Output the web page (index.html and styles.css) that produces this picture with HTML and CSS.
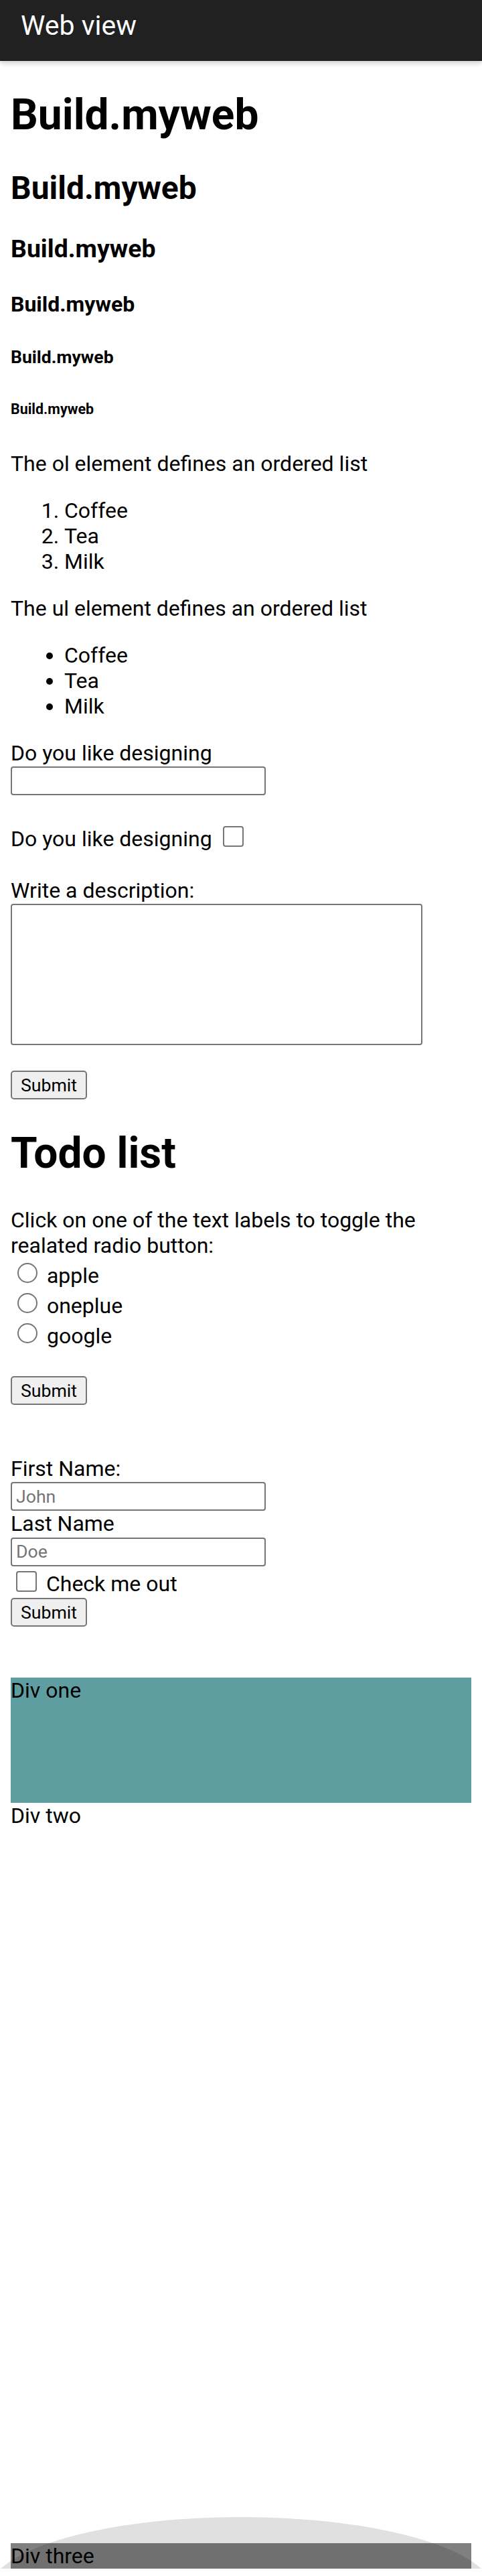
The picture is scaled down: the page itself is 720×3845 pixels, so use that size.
FILE: index.html
```html
<!DOCTYPE html>
<html lang="en">
<head>
<meta charset="utf-8">
<title>Web view</title>
<link rel="stylesheet" href="styles.css">
</head>
<body>
<header class="appbar"><span class="appbar-title">Web view</span></header>
<main class="page">
  <h1>Build.myweb</h1>
  <h2>Build.myweb</h2>
  <h3>Build.myweb</h3>
  <h4>Build.myweb</h4>
  <h5>Build.myweb</h5>
  <h6>Build.myweb</h6>
  <p>The ol element defines an ordered list</p>
  <ol class="list">
    <li>Coffee</li>
    <li>Tea</li>
    <li>Milk</li>
  </ol>
  <p>The ul element defines an ordered list</p>
  <ul class="list">
    <li>Coffee</li>
    <li>Tea</li>
    <li>Milk</li>
  </ul>
  <form class="form-a">
    <label class="row" for="like">Do you like designing</label>
    <input class="field" id="like" type="text">
    <div class="row check-row-a">Do you like designing <input class="check" type="checkbox"></div>
    <label class="row desc-label" for="desc">Write a description:</label>
    <textarea class="desc" id="desc"></textarea>
    <button class="submit submit-a" type="button">Submit</button>
  </form>
  <h1>Todo list</h1>
  <div class="intro">Click on one of the text labels to toggle the realated radio button:</div>
  <label class="radio-row"><input class="radio" type="radio" name="brand"> apple</label>
  <label class="radio-row"><input class="radio" type="radio" name="brand"> oneplue</label>
  <label class="radio-row"><input class="radio" type="radio" name="brand"> google</label>
  <button class="submit submit-todo" type="button">Submit</button>
  <form class="form-b">
    <label class="row" for="fname">First Name:</label>
    <input class="field" id="fname" type="text" placeholder="John">
    <label class="row" for="lname">Last Name</label>
    <input class="field field-last" id="lname" type="text" placeholder="Doe">
    <label class="row check-row-b"><input class="check check-b" type="checkbox"> Check me out</label>
    <button class="submit submit-b" type="button">Submit</button>
  </form>
  <div class="div-one">Div one</div>
  <div class="div-two">Div two</div>
  <div class="div-three">Div three</div>
</main>
<div class="overscroll">
  <div class="glow"></div>
  <div class="pill"></div>
</div>
</body>
</html>
```

FILE: styles.css
```css
* {
  box-sizing: border-box;
}

html,
body {
  margin: 0;
  padding: 0;
  background: #ffffff;
}

body {
  position: relative;
  font-family: Roboto, "Noto Sans", "Liberation Sans", sans-serif;
  font-size: 32px;
  color: #000000;
}

.appbar {
  position: relative;
  z-index: 1;
  height: 91px;
  padding: 14px 0 0 31px;
  background: #212121;
  color: #ffffff;
  box-shadow: 0 3px 8px rgba(0, 0, 0, 0.22);
}

.appbar-title {
  font-size: 41px;
  font-weight: 400;
  line-height: normal;
}

.page {
  margin: 0 16px;
}

.list {
  padding-left: 80px;
}

.row {
  display: block;
}

.form-a {
  margin: 32px 0 0;
}

.field {
  display: block;
  width: 381px;
  height: 43px;
  margin: 1px 0 0;
  padding: 0 6px;
  border: 2px solid #767676;
  border-radius: 4px;
  background: #ffffff;
  font-family: Roboto, "Noto Sans", sans-serif;
  font-size: 26.67px;
  color: #000000;
}

.field::placeholder {
  color: #757575;
}

.field-last {
  margin-top: 1.5px;
}

.check {
  -webkit-appearance: none;
  appearance: none;
  display: inline-block;
  width: 31px;
  height: 31px;
  margin: 0 6px 0 8px;
  border: 2px solid #767676;
  border-radius: 4px;
  background: #ffffff;
  vertical-align: -1px;
}

.check-row-a {
  margin-top: 45.8px;
}

.desc-label {
  margin-top: 38.5px;
}

.desc {
  display: block;
  width: 615px;
  height: 211px;
  margin: 1px 0 0;
  border: 2px solid #767676;
  border-radius: 4px;
  background: #ffffff;
  resize: none;
}

.submit {
  display: block;
  width: 114px;
  height: 43px;
  padding: 0;
  border: 2px solid #767676;
  border-radius: 5px;
  background: #efefef;
  color: #000000;
  font-family: Roboto, "Noto Sans", sans-serif;
  font-size: 26.67px;
  text-align: center;
}

.submit-a {
  margin-top: 38.7px;
}

.intro {
  margin: 0;
}

.radio-row {
  display: block;
}

.radio {
  -webkit-appearance: none;
  appearance: none;
  display: inline-block;
  width: 30px;
  height: 30px;
  margin: 7px 6px 0 10px;
  border: 2px solid #767676;
  border-radius: 50%;
  background: #ffffff;
  vertical-align: baseline;
}

.submit-todo {
  margin-top: 41px;
}

.form-b {
  margin: 76.3px 0 0;
}

.check-row-b {
  margin-top: 7px;
}

.submit-b {
  margin-top: 2.2px;
}

.div-one {
  height: 186.7px;
  margin-top: 76px;
  background: #5f9ea0;
}

.div-two {
  height: 1105px;
}

.div-three {
  background: #808080;
}

.overscroll {
  position: absolute;
  left: 0;
  top: 3757px;
  width: 720px;
  height: 88px;
  overflow: hidden;
  pointer-events: none;
}

.glow {
  position: absolute;
  left: -17px;
  top: 0;
  width: 754px;
  height: 222px;
  border-radius: 50%;
  background: rgba(0, 0, 0, 0.12);
}

.pill {
  position: absolute;
  left: 240px;
  top: 82px;
  width: 240px;
  height: 10px;
  border-radius: 4px;
  background: rgba(255, 255, 255, 0.5);
}
```
